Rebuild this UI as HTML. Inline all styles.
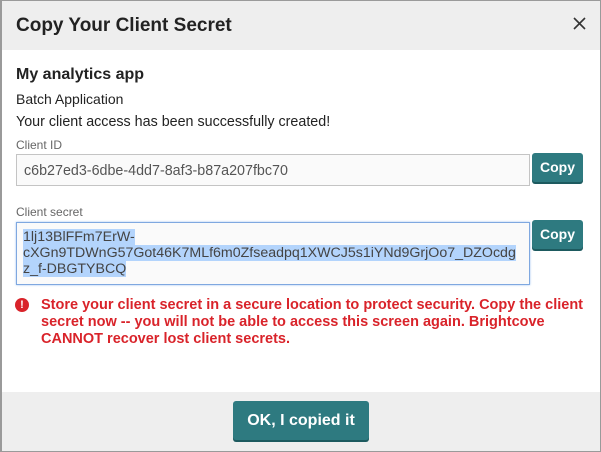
<!DOCTYPE html>
<html><head><style>
body{margin:0;width:601px;height:452px;background:#fff;font-family:"Liberation Sans",sans-serif;position:relative;overflow:hidden}
.abs{position:absolute}
.frame{left:0;top:0;border:1px solid #9a9a9a;border-left:2px solid #9a9a9a;box-sizing:border-box;width:601px;height:452px}
.hdr{left:2px;top:1px;width:598px;height:49px;background:#eeeeee}
.ftr{left:2px;top:392px;width:598px;height:59px;background:#eeeeee}
.btn{background:#2e7a80;color:#fff;font-weight:bold;border-radius:3px;box-shadow:0 2px 0 #1d5a5f;text-align:center}
.inp{border:1px solid #c4c4c4;background:#fafafa;box-sizing:border-box}
</style></head><body>
<div class="abs hdr"></div>
<div class="abs ftr"></div>
<div class="abs frame"></div>
<div class="abs" style="left:16px;top:15px;font-size:19px;font-weight:bold;color:#222">Copy Your Client Secret</div>
<svg class="abs" style="left:573px;top:17px" width="13" height="13"><path d="M1 1L12 12M12 1L1 12" stroke="#333" stroke-width="1.6"/></svg>
<div class="abs" style="left:16px;top:66px;font-size:16px;font-weight:bold;color:#222">My analytics app</div>
<div class="abs" style="left:16px;top:91px;font-size:14px;color:#222">Batch Application</div>
<div class="abs" style="left:16px;top:114px;font-size:14.3px;color:#222">Your client access has been successfully created!</div>
<div class="abs" style="left:16px;top:138px;font-size:12px;color:#666">Client ID</div>
<div class="abs inp" style="left:16px;top:154px;width:514px;height:32px;padding:8px 0 0 7px;font-size:14.3px;color:#555">c6b27ed3-6dbe-4dd7-8af3-b87a207fbc70</div>
<div class="abs btn" style="left:532px;top:153px;width:51px;height:29px;line-height:29px;font-size:14px">Copy</div>
<div class="abs" style="left:16px;top:205px;font-size:12px;color:#666">Client secret</div>
<div class="abs inp" style="left:16px;top:222px;width:514px;height:63px;border:1px solid #7fa8e0;box-shadow:0 0 2px #9cc0ef;padding:6px 0 0 6px;font-size:14.2px;color:#444;line-height:16px"><span style="background:#b3d4fc">1lj13BlFFm7ErW-<br>cXGn9TDWnG57Got46K7MLf6m0Zfseadpq1XWCJ5s1iYNd9GrjOo7_DZOcdg<br>z_f-DBGTYBCQ</span></div>
<div class="abs btn" style="left:532px;top:220px;width:51px;height:29px;line-height:29px;font-size:14px">Copy</div>
<div class="abs" style="left:15px;top:298px;width:14px;height:14px;border-radius:50%;background:#d9232a;color:#fff;font-size:11px;font-weight:bold;text-align:center;line-height:14px">!</div>
<div class="abs" style="left:41px;top:297px;width:556px;font-size:14.5px;font-weight:bold;color:#d9232a;line-height:17px">Store your client secret in a secure location to protect security. Copy the client secret now -- you will not be able to access this screen again. Brightcove CANNOT recover lost client secrets.</div>
<div class="abs btn" style="left:233px;top:401px;width:136px;height:39px;line-height:39px;font-size:16px">OK, I copied it</div>
</body></html>
